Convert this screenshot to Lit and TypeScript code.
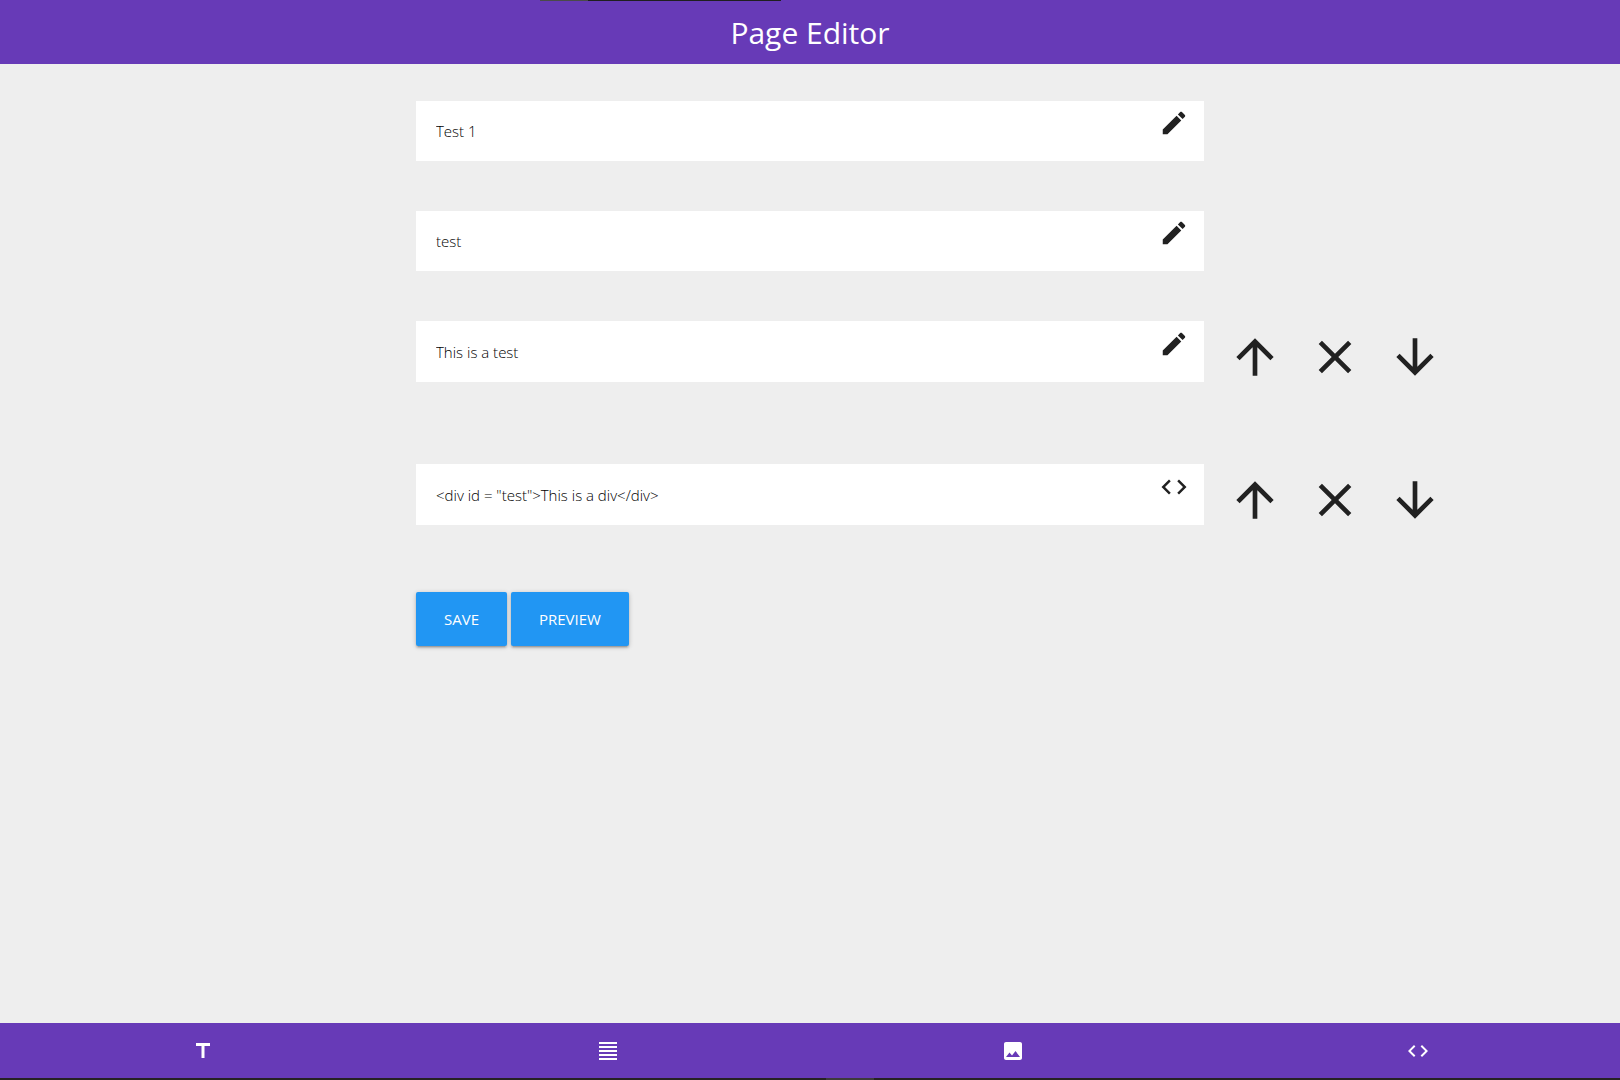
import { LitElement, html, css, svg } from "lit";
import { customElement } from "lit/decorators.js";

const paths: Record<string, string> = {
  edit: "M3 17.25V21h3.75L17.81 9.94l-3.75-3.75L3 17.25zM20.71 7.04c.39-.39.39-1.02 0-1.41l-2.34-2.34c-.39-.39-1.02-.39-1.41 0l-1.83 1.83 3.75 3.75 1.83-1.83z",
  code: "M9.4 16.6L4.8 12l4.6-4.6L8 6l-6 6 6 6 1.4-1.4zm5.2 0l4.6-4.6-4.6-4.6L16 6l6 6-6 6-1.4-1.4z",
  up: "M4 12l1.41 1.41L11 7.83V20h2V7.83l5.58 5.59L20 12l-8-8-8 8z",
  down: "M20 12l-1.41-1.41L13 16.17V4h-2v12.17l-5.58-5.59L4 12l8 8 8-8z",
  close: "M19 6.41L17.59 5 12 10.59 6.41 5 5 6.41 10.59 12 5 17.59 6.41 19 12 13.41 17.59 19 19 17.59 13.41 12z",
  title: "M5 4v3h5.5v12h3V7H19V4z",
  justify: "M3 21h18v-2H3v2zm0-4h18v-2H3v2zm0-4h18v-2H3v2zm0-4h18V7H3v2zm0-6v2h18V3H3z",
  image: "M21 19V5c0-1.1-.9-2-2-2H5c-1.1 0-2 .9-2 2v14c0 1.1.9 2 2 2h14c1.1 0 2-.9 2-2zM8.5 13.5l2.5 3.01L14.5 12l4.5 6H5l3.5-4.5z",
};

const icon = (name: string, size: string) => html`
  <svg class=${size} viewBox="0 0 24 24" aria-hidden="true">${svg`<path d=${paths[name]}></path>`}</svg>
`;

const blocks = [
  { label: "Page title", text: "Test 1", kind: "edit", movable: false },
  { label: "Page description", text: "test", kind: "edit", movable: false },
  { label: "Text block", text: "This is a test", kind: "edit", movable: true },
  { label: "HTML block", text: '<div id = "test">This is a div</div>', kind: "code", movable: true },
];

const tools = [
  { icon: "title", label: "Add title" },
  { icon: "justify", label: "Add text" },
  { icon: "image", label: "Add image" },
  { icon: "code", label: "Add code" },
];

@customElement("app-root")
export class AppRoot extends LitElement {
  static styles = css`
    :host {
      display: flex;
      flex-direction: column;
      min-height: 100vh;
      background: #eeeeee;
      color: #212121;
      font-family: "Segoe UI", "Open Sans", "Noto Sans", sans-serif;
      font-size: 15px;
    }
    button {
      border: 0;
      padding: 0;
      background: none;
      color: inherit;
      font: inherit;
      cursor: pointer;
    }
    svg { display: block; fill: currentColor; }
    .small { width: 24px; height: 24px; }
    .medium { width: 30px; height: 30px; }
    .large { width: 56px; height: 56px; }
    header {
      display: flex;
      align-items: center;
      justify-content: center;
      height: 64px;
      background:
        linear-gradient(90deg, #4a4a4a 20%, #1f1f1f 20%) 540px 0 / 241px 1px no-repeat,
        #673ab7;
      color: #fff;
    }
    h1 { margin: 0; padding-top: 2px; font-size: 30px; line-height: 40px; font-weight: 400; }
    main { flex: 1; padding: 37px 0; }
    .row {
      display: grid;
      grid-template-columns: 1fr minmax(0, 788px) 1fr;
      align-items: start;
      margin-bottom: 50px;
    }
    .row.movable { margin-bottom: 71px; }
    .field {
      grid-column: 2;
      display: flex;
      align-items: flex-start;
      background: #fff;
    }
    .movable .field { padding-top: 1px; }
    input {
      flex: 1;
      min-width: 0;
      height: 60px;
      box-sizing: border-box;
      padding: 0 20px;
      border: 0;
      outline: 0;
      background: none;
      color: #000;
      font: inherit;
      font-weight: 300;
    }
    .kind { margin: 7px 15px 0 0; }
    .actions { display: flex; height: 72px; padding-left: 11px; }
    .actions button { display: grid; place-items: center; width: 80px; }
    .buttons {
      grid-column: 2;
      display: flex;
      gap: 4px;
      margin-top: -15px;
    }
    .btn {
      height: 54px;
      padding: 0 28px;
      border-radius: 2px;
      background: #2196f3;
      color: #fff;
      text-transform: uppercase;
      box-shadow: 0 2px 2px 0 rgba(0, 0, 0, 0.14), 0 3px 1px -2px rgba(0, 0, 0, 0.12), 0 1px 5px 0 rgba(0, 0, 0, 0.2);
    }
    nav {
      display: grid;
      grid-template-columns: repeat(4, 1fr);
      height: 55px;
      padding-bottom: 2px;
      background:
        linear-gradient(#3d3a3b, #3d3a3b) 826px 100% / 48px 2px no-repeat,
        linear-gradient(#262223, #262223) 0 100% / 100% 2px no-repeat,
        #673ab7;
      color: #fff;
    }
    nav button { display: grid; place-items: center; }
  `;

  render() {
    return html`
      <header><h1>Page Editor</h1></header>
      <main>
        ${blocks.map(
          (b) => html`
            <div class="row ${b.movable ? "movable" : ""}">
              <div class="field">
                <input type="text" aria-label=${b.label} .value=${b.text} />
                <button class="kind" aria-label="Edit">${icon(b.kind, "medium")}</button>
              </div>
              ${b.movable
                ? html`<div class="actions">
                    <button aria-label="Move up">${icon("up", "large")}</button>
                    <button aria-label="Remove">${icon("close", "large")}</button>
                    <button aria-label="Move down">${icon("down", "large")}</button>
                  </div>`
                : null}
            </div>
          `
        )}
        <div class="row">
          <div class="buttons">
            <button class="btn">Save</button>
            <button class="btn">Preview</button>
          </div>
        </div>
      </main>
      <nav aria-label="Add block">
        ${tools.map((t) => html`<button aria-label=${t.label}>${icon(t.icon, "small")}</button>`)}
      </nav>
    `;
  }
}
